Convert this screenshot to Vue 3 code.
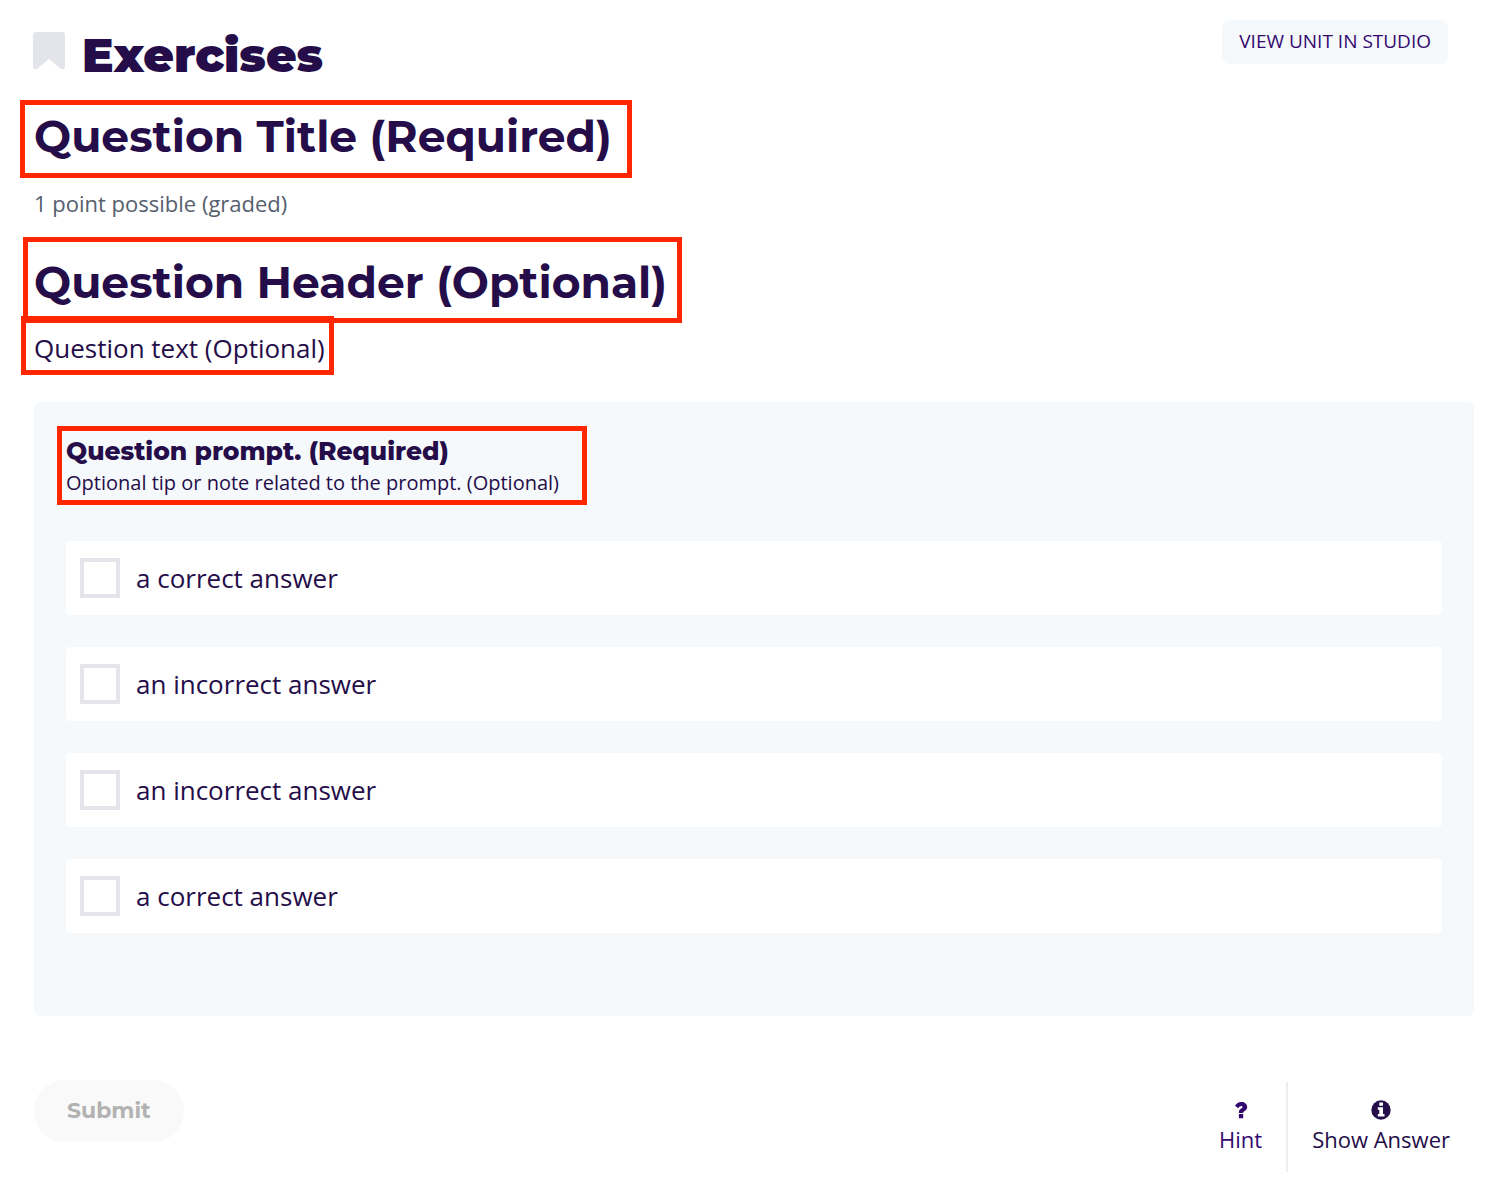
<script setup>
import { ref } from 'vue'

const answers = ref([
  { id: 'choice-0', text: 'a correct answer', checked: false },
  { id: 'choice-1', text: 'an incorrect answer', checked: false },
  { id: 'choice-2', text: 'an incorrect answer', checked: false },
  { id: 'choice-3', text: 'a correct answer', checked: false }
])
</script>

<template>
  <main class="unit">
    <header class="unit-header">
      <div class="unit-name">
        <svg class="bookmark" viewBox="0 0 32 38" aria-hidden="true">
          <path d="M3 0H29Q32 0 32 3V35Q32 38 28 37L16 27L4 37Q0 38 0 35V3Q0 0 3 0Z" fill="#e4e5ea" />
        </svg>
        <h1>Exercises</h1>
      </div>
      <a class="studio-link" href="#">VIEW UNIT IN STUDIO</a>
    </header>

    <h2 class="title marked mark-title">Question Title (Required)</h2>
    <p class="points">1 point possible (graded)</p>
    <h2 class="title marked mark-header">Question Header (Optional)</h2>
    <p class="question-text marked mark-text">Question text (Optional)</p>

    <fieldset class="panel" aria-labelledby="prompt">
      <div class="prompt-group marked mark-prompt">
        <h3 id="prompt">Question prompt. (Required)</h3>
        <p class="tip">Optional tip or note related to the prompt. (Optional)</p>
      </div>
      <div class="answers">
        <label v-for="answer in answers" :key="answer.id" class="answer" :for="answer.id">
          <input :id="answer.id" v-model="answer.checked" type="checkbox">
          <span>{{ answer.text }}</span>
        </label>
      </div>
    </fieldset>

    <footer class="actions">
      <button class="submit" type="button" disabled>Submit</button>
      <div class="help">
        <button class="help-button hint" type="button">
          <svg viewBox="0 0 20 20" aria-hidden="true">
            <path d="M4 5.800Q6.200 2 10.200 2C13.700 2 16.200 4.100 16.200 7C16.200 9.500 14.500 10.600 13 11.500Q12.200 12 12.200 12.900H7.900V12.200C7.900 10.200 9.100 9.300 10.300 8.600C11.100 8.100 11.500 7.800 11.500 7.100C11.500 5.500 8.900 5.300 7.200 8.200ZM7.900 14.100H12.200V18.200H7.900Z" fill="currentColor" />
          </svg>
          <span>Hint</span>
        </button>
        <button class="help-button" type="button">
          <svg viewBox="0 0 20 20" aria-hidden="true">
            <circle cx="10" cy="10" r="9.700" fill="currentColor" />
            <path d="M8.300 2.600H12V5.800H8.300ZM6.800 7.200H12V14H13.500V16.500H6.800V14H8.300V9.700H6.800Z" fill="#fff" />
          </svg>
          <span>Show Answer</span>
        </button>
      </div>
    </footer>
  </main>
</template>

<style>
body {
  margin: 0;
  background: #fff;
}
</style>

<style scoped>
.unit {
  padding: 0 24px 16px 33px;
  color: #240d49;
  font-family: "Open Sans", sans-serif;
  font-size: 26px;
}

h1,
h2,
h3,
p {
  margin: 0;
}

h1,
h2,
h3,
.submit {
  font-family: Montserrat, Inter, sans-serif;
}

.unit-header {
  display: flex;
  justify-content: space-between;
  align-items: flex-start;
  height: 90px;
  padding: 20px 26px 0 0;
  box-sizing: border-box;
  margin-bottom: 19px;
}

.unit-name {
  display: flex;
  align-items: flex-start;
  gap: 17px;
  padding-top: 6px;
}

.bookmark {
  width: 32px;
  height: 38px;
  margin-top: 6px;
}

h1 {
  font-size: 47px;
  font-weight: 900;
  line-height: 60px;
}

.studio-link {
  padding: 0 17px 2px;
  border-radius: 8px;
  background: #f5f9fc;
  color: #32086f;
  font-size: 19px;
  line-height: 42px;
  text-decoration: none;
}

.title,
.points,
.question-text,
.panel,
.actions {
  margin-left: 1px;
}

.marked {
  position: relative;
  width: fit-content;
}

/* Red call-out frame drawn around an authored field */
.marked::after {
  content: "";
  position: absolute;
  border: 5px solid #ff2600;
  pointer-events: none;
}

.mark-title::after {
  inset: -9px -20px -15px -14px;
}

.mark-header::after {
  inset: -18px -15px -14px -11px;
}

.mark-text::after {
  inset: -14px -9px -9px -13px;
}

.mark-prompt::after {
  inset: -8px -28px -7px -9px;
}

.title {
  font-size: 44px;
  font-weight: 700;
  line-height: 54px;
}

.points {
  margin-top: 24px;
  margin-bottom: 36px;
  color: #55606e;
  font-size: 22px;
  line-height: 32px;
}

.question-text {
  margin-top: 21px;
  line-height: 36px;
}

.panel {
  margin-top: 36px;
  margin-right: 0;
  margin-bottom: 64px;
  padding: 32px 32px 83px;
  border: 0;
  border-radius: 6px;
  background: #f5f9fc;
}

h3 {
  font-size: 25px;
  font-weight: 800;
  line-height: 34px;
}

.tip {
  font-size: 20px;
  line-height: 30px;
}

.answers {
  display: flex;
  flex-direction: column;
  gap: 32px;
  margin-top: 43px;
}

.answer {
  display: flex;
  align-items: center;
  gap: 16px;
  height: 74px;
  padding: 0 14px;
  border-radius: 4px;
  background: #fff;
}

.answer input {
  appearance: none;
  width: 40px;
  height: 40px;
  margin: 0;
  border: 4px solid #e4e5ea;
  background: #fff;
}

.answer input:checked {
  background: #240d49;
}

.actions {
  display: flex;
  justify-content: space-between;
  align-items: flex-start;
}

.submit {
  height: 62px;
  padding: 0 33px 2px;
  border: 0;
  border-radius: 31px;
  background: #f9f9f9;
  color: #b2b2b2;
  font-size: 22px;
  font-weight: 700;
}

.help {
  display: flex;
  margin-top: 2px;
}

.help-button {
  display: flex;
  flex-direction: column;
  align-items: center;
  height: 90px;
  padding: 18px 24px 0;
  border: 0;
  background: none;
  color: #240d49;
  font-family: inherit;
  font-size: 22px;
  line-height: 38px;
}

.help-button svg {
  width: 20px;
  height: 20px;
}

.hint {
  border-right: 2px solid #eee;
  color: #32086f;
}
</style>
